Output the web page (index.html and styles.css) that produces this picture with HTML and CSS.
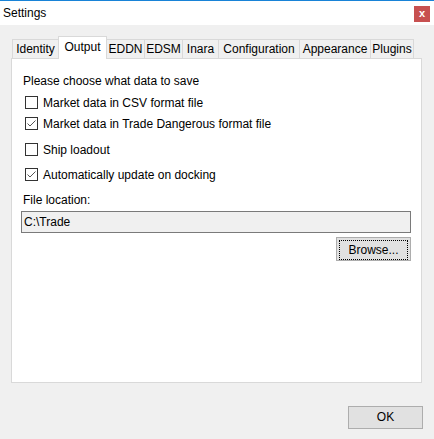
FILE: index.html
```html
<!DOCTYPE html>
<html>
<head>
<meta charset="utf-8">
<link rel="stylesheet" href="styles.css">
</head>
<body>
<div class="window">
  <div class="titlebar">
    <span class="title">Settings</span>
    <span class="close">x</span>
  </div>
  <div class="content">
    <div class="tabs">
      <div class="tab">Identity</div>
      <div class="tab selected">Output</div>
      <div class="tab">EDDN</div>
      <div class="tab">EDSM</div>
      <div class="tab">Inara</div>
      <div class="tab">Configuration</div>
      <div class="tab">Appearance</div>
      <div class="tab last">Plugins</div>
    </div>
    <div class="panel">
      <div class="heading">Please choose what data to save</div>
      <div class="check row1"><span class="box"></span><span>Market data in CSV format file</span></div>
      <div class="check row2"><span class="box"><svg width="11" height="11" viewBox="0 0 11 11"><polyline points="1.5,5.5 4,8 9.5,2.5" fill="none" stroke="#555" stroke-width="1"/></svg></span><span>Market data in Trade Dangerous format file</span></div>
      <div class="check row3"><span class="box"></span><span>Ship loadout</span></div>
      <div class="check row4"><span class="box"><svg width="11" height="11" viewBox="0 0 11 11"><polyline points="1.5,5.5 4,8 9.5,2.5" fill="none" stroke="#555" stroke-width="1"/></svg></span><span>Automatically update on docking</span></div>
      <div class="label">File location:</div>
      <div class="input">C:\Trade</div>
      <div class="browse-row"><div class="button browse"><span class="focus">Browse...</span></div></div>
    </div>
    <div class="footer"><div class="button ok">OK</div></div>
  </div>
</div>
</body>
</html>
```
FILE: styles.css
```css
html, body { margin: 0; padding: 0; }
body {
  width: 434px;
  height: 439px;
  background: #f0f0f0;
  font-family: "Liberation Sans", Arial, sans-serif;
  font-size: 12px;
  color: #000;
  overflow: hidden;
}
.window {
  height: 439px;
  box-sizing: border-box;
  border-top: 1px solid #1883d7;
  display: flex;
  flex-direction: column;
}
.titlebar {
  height: 24px;
  background: #fff;
  display: flex;
  align-items: center;
  justify-content: space-between;
  padding: 0 4px 0 3px;
}
.title { font-size: 12px; }
.close {
  width: 16px;
  height: 16px;
  margin-top: 1px;
  background: #c75050;
  color: #fff;
  font-weight: bold;
  font-size: 11px;
  line-height: 14px;
  text-align: center;
}
.content {
  padding: 11px 12px 0 11px;
  display: flex;
  flex-direction: column;
}
.tabs {
  display: flex;
  align-items: flex-end;
  height: 22px;
  margin-left: 1px;
  position: relative;
  z-index: 1;
}
.tab {
  box-sizing: border-box;
  height: 19px;
  border: 1px solid #d9d9d9;
  border-bottom: none;
  border-right: none;
  background: #f0f0f0;
  text-align: center;
  line-height: 18px;
  white-space: nowrap;
}
.tab.last { border-right: 1px solid #d9d9d9; }
.tab.selected {
  height: 23px;
  margin-bottom: -1px;
  background: #fff;
  border-right: 1px solid #d9d9d9;
  line-height: 20px;
}
.tab:nth-child(1) { width: 46px; }
.tab:nth-child(2) { width: 49px; }
.tab:nth-child(3) { width: 37px; border-left: none; }
.tab:nth-child(4) { width: 38px; }
.tab:nth-child(5) { width: 36px; }
.tab:nth-child(6) { width: 81px; }
.tab:nth-child(7) { width: 71px; }
.tab:nth-child(8) { width: 44px; }
.panel {
  box-sizing: border-box;
  height: 325px;
  background: #fff;
  border: 1px solid #d9d9d9;
  padding: 14px 10px 0 9px;
  display: flex;
  flex-direction: column;
}
.heading { line-height: 16px; margin-left: 2px; }
.check {
  display: flex;
  align-items: center;
  height: 17px;
  margin-left: 4px;
  gap: 5px;
}
.row1 { margin-top: 5px; }
.row2 { margin-top: 4px; }
.row3 { margin-top: 9px; }
.row4 { margin-top: 8px; }
.box {
  box-sizing: border-box;
  width: 13px;
  height: 13px;
  border: 1px solid #333;
  background: #fff;
  display: flex;
}
.label { line-height: 16px; margin-top: 9px; margin-left: 2px; }
.input {
  box-sizing: border-box;
  height: 22px;
  margin-top: 3px;
  border: 1px solid #7a7a7a;
  background: #f0f0f0;
  padding-left: 2px;
  line-height: 20px;
}
.browse-row { display: flex; justify-content: flex-end; margin-top: 4px; }
.button {
  box-sizing: border-box;
  width: 75px;
  background: #e1e1e1;
  border: 1px solid #adadad;
  text-align: center;
}
.browse {
  height: 24px;
  padding: 2px;
}
.focus {
  display: block;
  height: 18px;
  border: 1px dotted #000;
  line-height: 18px;
}
.footer {
  display: flex;
  justify-content: flex-end;
  margin-top: 23px;
  margin-right: -1px;
}
.ok { height: 23px; line-height: 21px; }
```
